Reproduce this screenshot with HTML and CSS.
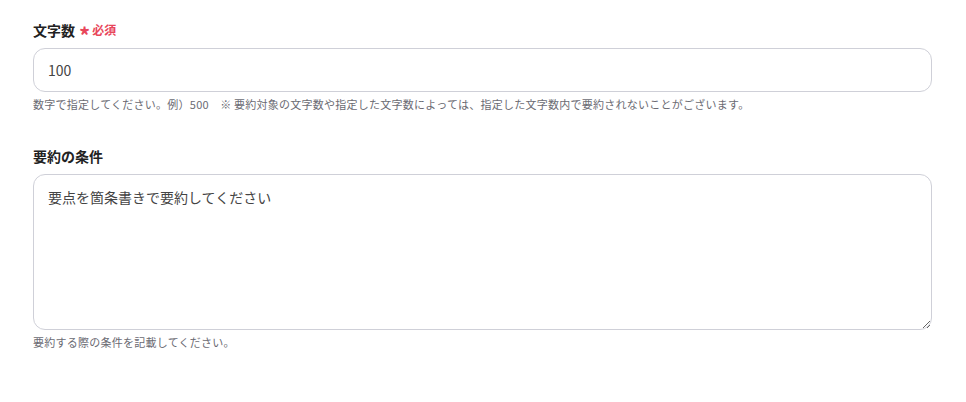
FILE: index.html
```html
<!DOCTYPE html>
<html lang="ja">
<head>
<meta charset="utf-8">
<link rel="stylesheet" href="styles.css">
</head>
<body>
<div class="form">
  <div class="field">
    <label class="label">文字数<span class="req"><span class="star">*</span>必須</span></label>
    <input class="input" type="text" value="100">
    <p class="help">数字で指定してください。例）500　※ 要約対象の文字数や指定した文字数によっては、指定した文字数内で要約されないことがございます。</p>
  </div>
  <div class="field">
    <label class="label">要約の条件</label>
    <textarea class="textarea">要点を箇条書きで要約してください</textarea>
    <p class="help">要約する際の条件を記載してください。</p>
  </div>
</div>
</body>
</html>
```
FILE: styles.css
```css
* { box-sizing: border-box; }
body {
  margin: 0;
  background: #fff;
  font-family: "Noto Sans CJK JP", "Noto Sans", sans-serif;
  color: #222;
}
.form {
  width: 899px;
  margin-left: 33px;
  padding-top: 20px;
  display: flex;
  flex-direction: column;
  gap: 34px;
}
.field { display: flex; flex-direction: column; }
.label {
  font-size: 14px;
  font-weight: 700;
  line-height: 20px;
  height: 20px;
  color: #222;
  display: flex;
  align-items: center;
  margin-bottom: 8px;
}
.req {
  color: #e8465a;
  font-size: 12px;
  font-weight: 700;
  margin-left: 4px;
  display: flex;
  align-items: center;
  height: 20px;
}
.star {
  font-size: 22px;
  margin-right: 2px;
  line-height: 0;
  position: relative;
  top: 4px;
}
.input, .textarea {
  width: 100%;
  border: 1px solid #cfd0d8;
  border-radius: 12px;
  font-family: inherit;
  font-size: 14px;
  color: #444;
  padding: 0 14px;
  outline: none;
  background: #fff;
}
.input { height: 44px; }
.textarea {
  height: 156px;
  padding: 10px 14px;
  line-height: 24px;
  resize: vertical;
}
.help {
  margin: 4px 0 0;
  font-size: 11px;
  line-height: 16px;
  letter-spacing: 0.25px;
  color: #6b6b73;
}
```
